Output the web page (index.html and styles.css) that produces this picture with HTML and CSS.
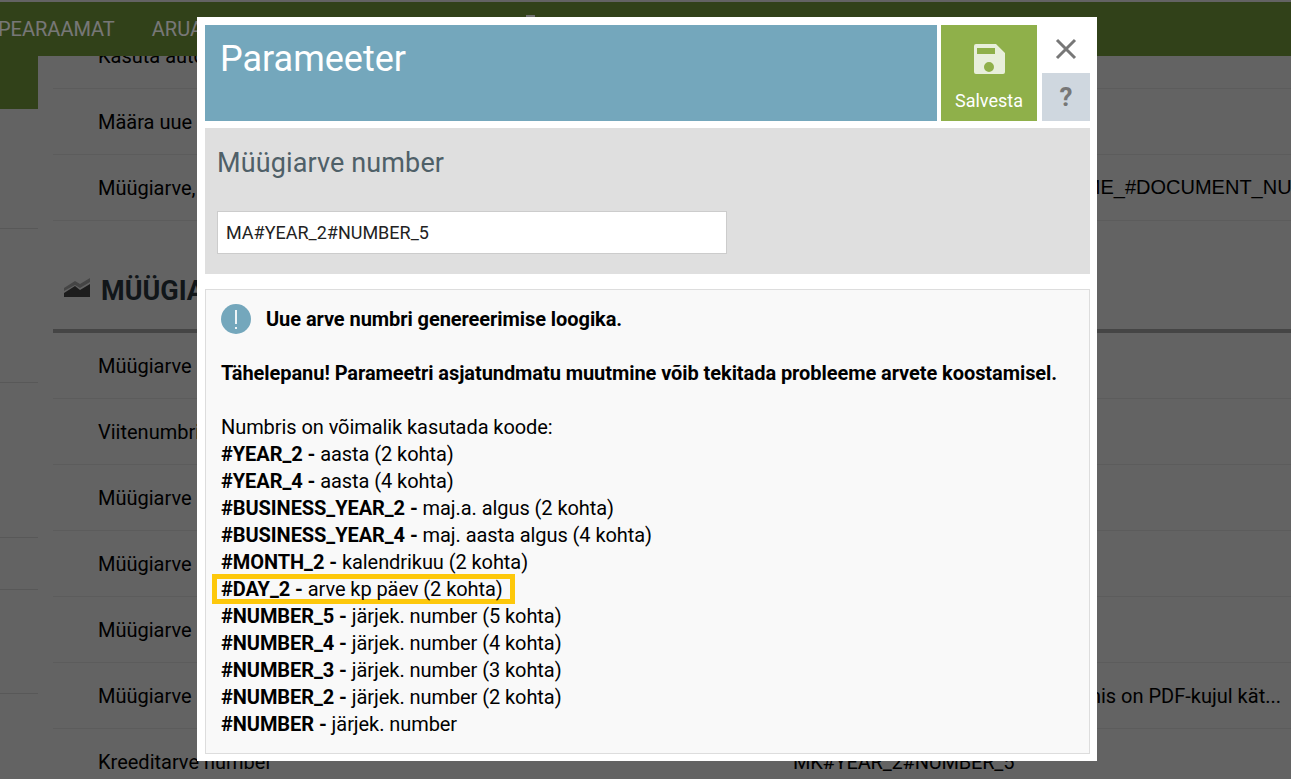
FILE: index.html
```
<!DOCTYPE html>
<html lang="et">
<head>
<meta charset="utf-8">
<title>Parameeter</title>
<link rel="stylesheet" href="styles.css">
</head>
<body>
<div class="page">
  <nav class="topbar">
    <span class="nav-item">Pearaamat</span>
    <span class="nav-item nav-wide">Aruanded</span>
    <span class="nav-peek"></span>
  </nav>
  <div class="main">
    <aside class="sidebar">
      <div class="side-active"></div>
      <div class="side-gap-1"></div>
      <div class="side-gap-2"></div>
      <div class="side-gap-3"></div>
      <div class="side-gap-4"></div>
      <div class="side-gap-5"></div>
    </aside>
    <section class="content">
      <div class="row"><span class="row-label">Kasuta automaatset</span></div>
      <div class="row"><span class="row-label">Määra uue</span></div>
      <div class="row"><span class="row-label">Müügiarve, kreeditarve</span><span class="row-value row-value-code">#TAG_#DOCUMENT_TYPE_NAME_#DOCUMENT_NUMBER</span></div>
      <h2 class="section-title">
        <svg class="section-icon" viewBox="0 0 26 19"><path d="M0 10 11 3l5 3L26 0v4L16 10 11 7 0 13z" fill="#8a8a8a"/><path d="M0 15 11 8l5 4 10-6v13H0z" fill="#3a3a3a"/></svg>
        Müügiarved
      </h2>
      <div class="row"><span class="row-label">Müügiarve</span></div>
      <div class="row"><span class="row-label">Viitenumbri</span></div>
      <div class="row"><span class="row-label">Müügiarve</span></div>
      <div class="row"><span class="row-label">Müügiarve</span></div>
      <div class="row"><span class="row-label">Müügiarve</span></div>
      <div class="row"><span class="row-label">Müügiarve</span><span class="row-value row-value-end">Arve dokument, mis on PDF-kujul kät...</span></div>
      <div class="row"><span class="row-label">Kreeditarve number</span><span class="row-value">MK#YEAR_2#NUMBER_5</span></div>
    </section>
  </div>
</div>

<div class="backdrop"></div>

<div class="modal">
  <header class="modal-head">
    <div class="modal-title"><h1>Parameeter</h1></div>
    <button class="save-btn" type="button">
      <svg class="save-icon" viewBox="0 0 31 30"><path fill-rule="evenodd" d="M2 0h20l9 9v19a2 2 0 0 1-2 2H2a2 2 0 0 1-2-2V2a2 2 0 0 1 2-2zm1 4v6h18V4zm12 14a5 5 0 1 0 0 10 5 5 0 0 0 0-10z" fill="#e8efdb"/></svg>
      <span>Salvesta</span>
    </button>
    <div class="head-side">
      <button class="close-btn" type="button" aria-label="Sulge">
        <svg viewBox="0 0 22 22" width="22" height="22"><path d="M2 2l18 18M20 2L2 20" stroke="#777" stroke-width="3" fill="none"/></svg>
      </button>
      <button class="help-btn" type="button">?</button>
    </div>
  </header>

  <section class="param">
    <h3>Müügiarve number</h3>
    <input class="param-input" type="text" value="MA#YEAR_2#NUMBER_5">
  </section>

  <section class="info">
    <div class="info-head">
      <span class="info-badge"><i></i><b></b></span>
      <strong>Uue arve numbri genereerimise loogika.</strong>
    </div>
    <p class="warn"><strong>Tähelepanu! Parameetri asjatundmatu muutmine võib tekitada probleeme arvete koostamisel.</strong></p>
    <div class="codes">
      <div>Numbris on võimalik kasutada koode:</div>
      <div><strong>#YEAR_2 - </strong>aasta (2 kohta)</div>
      <div><strong>#YEAR_4 - </strong>aasta (4 kohta)</div>
      <div><strong>#BUSINESS_YEAR_2 - </strong>maj.a. algus (2 kohta)</div>
      <div><strong>#BUSINESS_YEAR_4 - </strong>maj. aasta algus (4 kohta)</div>
      <div><strong>#MONTH_2 - </strong>kalendrikuu (2 kohta)</div>
      <div class="mark-line"><span class="mark"><strong>#DAY_2 - </strong>arve kp päev (2 kohta)</span></div>
      <div><strong>#NUMBER_5 - </strong>järjek. number (5 kohta)</div>
      <div><strong>#NUMBER_4 - </strong>järjek. number (4 kohta)</div>
      <div><strong>#NUMBER_3 - </strong>järjek. number (3 kohta)</div>
      <div><strong>#NUMBER_2 - </strong>järjek. number (2 kohta)</div>
      <div><strong>#NUMBER - </strong>järjek. number</div>
    </div>
  </section>
</div>
</body>
</html>
```
FILE: styles.css
```
* { box-sizing: border-box; }
html, body { margin: 0; height: 100%; overflow: hidden; }
body { font-family: Roboto, "Liberation Sans", sans-serif; font-size: 20px; color: #000; background: #c6c6c6; }

.page { height: 779px; display: flex; flex-direction: column; overflow: hidden; padding-top: 2px; background: #c6c6c6; }
.topbar { height: 54px; flex: none; background: #638332; display: flex; gap: 36px; padding-left: 115px; align-items: center; overflow: hidden; margin-left: -117px; }
.nav-item { color: #eee; font-size: 20px; text-transform: uppercase; white-space: nowrap; flex: none; }
.nav-wide { width: 338px; margin-left: 1px; }
.nav-peek { flex: none; width: 9px; height: 2px; align-self: flex-start; margin-top: 13px; background: #e0e0e0; }

.main { flex: 1; display: flex; gap: 15px; overflow: hidden; min-height: 0; }
.sidebar { width: 38px; flex: none; }
.side-active { height: 53px; background: #638332; }
.side-gap-1, .side-gap-2, .side-gap-3, .side-gap-4, .side-gap-5 { border-bottom: 1px solid #b0b0b0; }
.side-gap-1 { height: 120px; }
.side-gap-2 { height: 154px; }
.side-gap-3 { height: 155px; }
.side-gap-4 { height: 52px; }
.side-gap-5 { height: 104px; }

.content { flex: 1; min-width: 0; margin-top: -33px; }
.row { height: 66px; padding: 0 0 0 45px; border-bottom: 1px solid #b8b8b8; display: flex; align-items: center; white-space: nowrap; }
.row-label { width: 695px; flex: none; }
.row-value { letter-spacing: -.2px; }
.row-value-code { font-family: "Liberation Sans", Arial, sans-serif; letter-spacing: 0; }
.row-value-end { width: 488px; text-align: right; flex: none; letter-spacing: 0; }

.section-title { height: 112px; margin: 0; padding: 54px 0 0 11px; border-bottom: 4px solid #8a8a8a; font-size: 27px; font-weight: 700; color: #222c33; text-transform: uppercase; display: flex; align-items: flex-start; gap: 11px; line-height: 32px; }
.section-icon { width: 26px; height: 19px; margin-top: 3px; flex: none; }

.backdrop { position: fixed; inset: 0; background: rgba(0, 0, 0, .5); }

.modal { position: fixed; left: 197px; top: 17px; width: 900px; height: 744px; background: #fff; padding: 8px 7px 7px 8px; display: flex; flex-direction: column; }
.modal-head { display: flex; height: 96px; flex: none; }
.modal-title { width: 732px; background: #74a7bc; padding: 14px 15px; }
.modal-title h1 { margin: 0; font-size: 36px; font-weight: 400; line-height: 40px; color: #fff; }
.save-btn { width: 96px; margin-left: 4px; background: #8fb04a; border: 0; padding: 19px 0 0; color: #fff; font: 400 18px Roboto, sans-serif; display: flex; flex-direction: column; align-items: center; gap: 16px; }
.save-icon { width: 31px; height: 30px; flex: none; }
.head-side { width: 48px; margin-left: 5px; display: flex; flex-direction: column; }
.close-btn { height: 48px; border: 0; background: none; padding: 0; display: flex; align-items: center; justify-content: center; }
.help-btn { height: 48px; border: 0; background: #cfd7df; color: #777; font: 700 26px Roboto, sans-serif; padding: 0; }

.param { margin-top: 7px; height: 146px; flex: none; background: #dfdfdf; padding: 0 12px; }
.param h3 { margin: 0; padding-top: 20px; font-size: 27px; font-weight: 400; line-height: 30px; color: #4f6068; letter-spacing: .12px; }
.param-input { display: block; margin-top: 33px; width: 510px; height: 43px; padding: 0 8px; border: 1px solid #ccc; background: #fff; color: #222; font: 400 18px Roboto, sans-serif; }

.info { margin-top: 15px; height: 465px; flex: none; background: #f9f9f9; border: 1px solid #ddd; padding: 14px 15px; line-height: 27px; letter-spacing: -.07px; }
.info-head { display: flex; align-items: center; gap: 15px; height: 30px; }
.info-badge { width: 30px; height: 30px; border-radius: 50%; background: #74a7bc; display: flex; flex-direction: column; align-items: center; justify-content: center; gap: 3px; flex: none; }
.info-badge i { width: 2px; height: 14px; background: #eef4f7; }
.info-badge b { width: 2px; height: 2px; background: #eef4f7; }
.warn { margin: 26px 0 27px; }
.mark-line { height: 27px; display: flow-root; }
.mark { display: block; width: 303px; height: 30px; margin: -2px 0 0 -9px; padding-left: 4px; border: 5px solid #fdc80b; line-height: 20px; white-space: nowrap; }
```
